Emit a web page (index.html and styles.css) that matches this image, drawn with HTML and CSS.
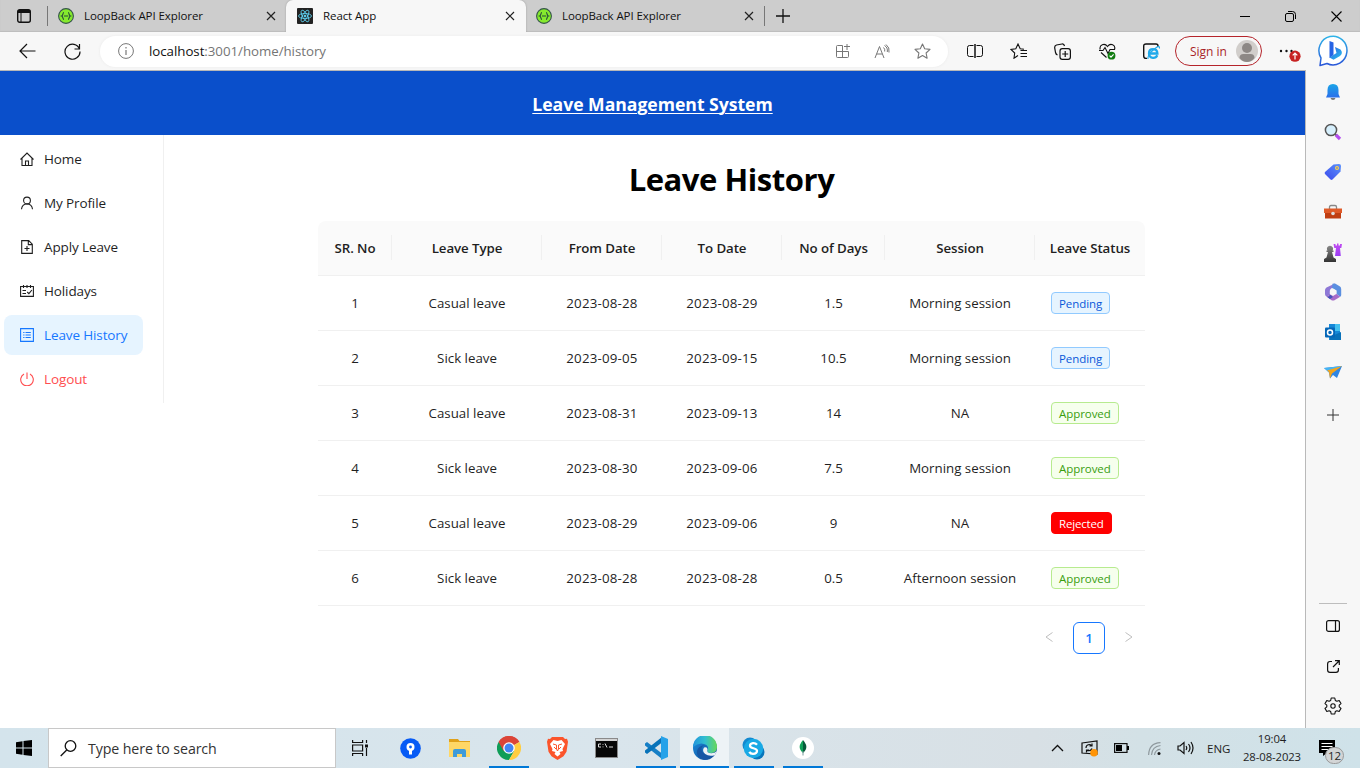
FILE: index.html
```html
<!DOCTYPE html>
<html lang="en">
<head>
<meta charset="utf-8">
<title>React App</title>
<link rel="stylesheet" href="styles.css">
</head>
<body>
<svg class="defs" width="0" height="0">
  <defs>
    <symbol id="loopback" viewBox="0 0 16 16"><circle cx="8" cy="8" r="7.400" fill="#85ea2d" stroke="#35544b" stroke-width="1.100"/><path d="M6 4.500C4.500 4.500 5.300 7.500 3.700 8c1.600.5.8 3.500 2.300 3.500M10 4.500c1.500 0 .7 3 2.300 3.500-1.600.5-.8 3.500-2.300 3.500M6 8h4.200" fill="none" stroke="#25473b" stroke-width="1.100"/></symbol>
    <symbol id="close" viewBox="0 0 10 10"><path d="M1 1l8 8M9 1l-8 8" stroke="#222" stroke-width="1.200"/></symbol>
    <linearGradient id="gBing" x1="0" y1="0" x2="1" y2="1"><stop offset="0" stop-color="#2a5fe0"/><stop offset="1" stop-color="#29c3ee"/></linearGradient>
    <linearGradient id="gBubble" x1="0" y1="0" x2="0" y2="1"><stop offset="0" stop-color="#2fb4e8"/><stop offset="1" stop-color="#2a56d8"/></linearGradient>
    <linearGradient id="gBell" x1="0" y1="0" x2="0" y2="1"><stop offset="0" stop-color="#1aa5e8"/><stop offset="1" stop-color="#2b6fea"/></linearGradient>
    <linearGradient id="gTag" x1="1" y1="0" x2="0" y2="1"><stop offset="0" stop-color="#5d93fb"/><stop offset="1" stop-color="#3a49ec"/></linearGradient>
    <linearGradient id="gRook" x1="0" y1="0" x2="0" y2="1"><stop offset="0" stop-color="#c24cf0"/><stop offset="1" stop-color="#9b3df5"/></linearGradient>
    <linearGradient id="gPawn" x1="0" y1="0" x2="0" y2="1"><stop offset="0" stop-color="#888"/><stop offset="1" stop-color="#333"/></linearGradient>
    <linearGradient id="gEdgeTop" x1="0" y1="0" x2="1" y2="0"><stop offset="0" stop-color="#2294dc"/><stop offset=".5" stop-color="#32bfd0"/><stop offset="1" stop-color="#67d858"/></linearGradient>
    <linearGradient id="gEdgeLow" x1="0" y1="0" x2="1" y2="1"><stop offset="0" stop-color="#1b8ee0"/><stop offset="1" stop-color="#114a92"/></linearGradient>
  </defs>
</svg>

<div class="screen">
  <div class="tabstrip">
    <div class="tab-actions"><svg width="14" height="14" viewBox="0 0 14 14" fill="none"><rect x=".7" y=".7" width="12.600" height="12.600" rx="2" stroke="#111" stroke-width="1.400"/><path d="M1 2.500h12" stroke="#111" stroke-width="3"/><path d="M4 3v10" stroke="#111"/></svg></div>
    <div class="tab tab-first"><svg width="16" height="16"><use href="#loopback"/></svg><span class="tab-title">LoopBack API Explorer</span><svg width="10" height="10"><use href="#close"/></svg></div>
    <div class="tab tab-active"><svg width="16" height="16" viewBox="0 0 16 16" fill="none" stroke="#61dafb" stroke-width=".8"><rect width="16" height="16" rx="1" fill="#222" stroke="none"/><ellipse cx="8" cy="8" rx="6.500" ry="2.500"/><ellipse cx="8" cy="8" rx="6.500" ry="2.500" transform="rotate(60 8 8)"/><ellipse cx="8" cy="8" rx="6.500" ry="2.500" transform="rotate(120 8 8)"/><circle cx="8" cy="8" r="1" fill="#61dafb"/></svg><span class="tab-title">React App</span><svg width="10" height="10"><use href="#close"/></svg></div>
    <div class="tab tab-last"><svg width="16" height="16"><use href="#loopback"/></svg><span class="tab-title">LoopBack API Explorer</span><svg width="10" height="10"><use href="#close"/></svg></div>
    <svg class="new-tab" width="14" height="14" viewBox="0 0 14 14"><path d="M7 0v14M0 7h14" stroke="#111" stroke-width="1.300"/></svg>
    <div class="window-buttons">
      <svg width="10" height="10"><path d="M0 5.500h10" stroke="#000"/></svg>
      <svg width="11" height="11" fill="none" stroke="#000"><rect x=".5" y="2.500" width="8" height="8" rx="1.500"/><path d="M3 .5h4.500q3 0 3 3V8"/></svg>
      <svg width="11" height="11"><path d="M.5.5l10 10m0-10l-10 10" stroke="#000" stroke-width="1.100"/></svg>
    </div>
  </div>

  <div class="toolbar">
    <svg class="nav-back" width="17" height="16" viewBox="0 0 17 16" fill="none" stroke="#111" stroke-width="1.200"><path d="M16.500 8H1M8 1L1 8l7 7"/></svg>
    <svg class="nav-reload" width="17" height="17" viewBox="0 0 17 17" fill="none" stroke="#111" stroke-width="1.200"><path d="M15.500 6A7.500 7.500 0 1 0 16 8.500M15.500 1v5h-5"/></svg>
    <div class="address">
      <svg width="16" height="16" viewBox="0 0 16 16" fill="none" stroke="#777"><circle cx="8" cy="8" r="7.400"/><path d="M8 7v5M8 4v1.500" stroke-width="1.200"/></svg>
      <span class="url"><b>localhost</b>:3001/home/history</span>
      <svg class="addr-icon" width="15" height="15" viewBox="0 0 15 15" fill="none" stroke="#777"><path d="M7.500 1.500h-5q-1 0-1 1v10q0 1 1 1h10q1 0 1-1v-5H1.500M7.500 1.500v12M12 0v6M9 2.500h6"/></svg>
      <svg class="addr-icon read-aloud" width="16" height="15" viewBox="0 0 16 15" fill="none" stroke="#777"><path d="M1 14L5.500 2.500 10 14M2.700 10h5.600M9.500 3.500q1.700 1.500 1.200 4M10.500 1.500q3.500 2 2.800 6.500M12 .5q4 3 3 8"/></svg>
      <svg class="addr-icon" width="17" height="16" viewBox="0 0 17 16" fill="none" stroke="#777" stroke-width="1.100"><path d="M8.500 1l2.200 4.700 5.300.7-3.900 3.600 1 5.200-4.600-2.600-4.600 2.600 1-5.200L1 6.400l5.300-.7z" stroke-linejoin="round"/></svg>
    </div>
    <svg class="tool" width="16" height="14" viewBox="0 0 16 14" fill="none" stroke="#111"><path d="M6.500 1.500H2.500q-2 0-2 2v7q0 2 2 2h4M9.500 1.500h4q2 0 2 2v7q0 2-2 2h-4"/><path d="M8 0v14" stroke-width="1.500"/></svg>
    <svg class="tool" width="17" height="16" viewBox="0 0 17 16" fill="none" stroke="#111" stroke-width="1.100"><path d="M8 12.500l-4 2.700.7-5.200L1 6.400l4.800-.7L8 1l2.200 4.700 3.800.5M10.500 7.500H17M10.500 10.500H17M10.500 13.500H17"/></svg>
    <svg class="tool" width="17" height="17" viewBox="0 0 17 17" fill="none" stroke="#111" stroke-width="1.200"><path d="M3.500 12Q2 11.500 1.500 9.500L.7 4.800Q.5 2.500 2.500 2L8 1q2-.3 2.500 2M11.200 8v6M8.200 11h6"/><rect x="6" y="5.700" width="10.400" height="10.600" rx="2.300"/></svg>
    <svg class="tool" width="17" height="17" viewBox="0 0 17 17" fill="none" stroke="#111" stroke-width="1.100"><path d="M1.200 6.500C0 2 5.500-.5 8.500 3.500 11.500-.5 17 2 15.500 6.500M0 7.500h4l2-3 3 6 2-4h5M2 9.500l5.500 5"/><circle cx="12.500" cy="12.700" r="3.900" fill="#107c10" stroke="none"/><path d="M10.600 12.700l1.400 1.400 2.600-2.700" stroke="#fff"/></svg>
    <svg class="tool" width="17" height="17" viewBox="0 0 17 17" fill="none"><path d="M4 15.400H3Q.7 15.400.7 13V3Q.7 1 3 1h10q2 0 2 2v1" stroke="#111" stroke-width="1.400"/><path d="M14.300 12.200q-1.300 2.800-4.300 2.600-4-.5-4-4.400 0-4.200 4-4.200 4.200 0 4.400 4.300H7" stroke="#20a9ea" stroke-width="2.300"/><path d="M5 16Q4 11 14 4q3-1.200 2.400 1.500" stroke="#20a9ea" stroke-width="1.200"/></svg>
    <div class="signin"><span>Sign in</span><svg width="22" height="22" viewBox="0 0 22 22"><circle cx="11" cy="11" r="11" fill="#d1cecb"/><circle cx="11" cy="8" r="5" fill="#8d8885"/><path d="M3.500 18q0-4 4-4h7q4 0 4 4-3 4-7.500 4t-7.500-4" fill="#8d8885"/></svg></div>
    <svg class="more" width="22" height="22" viewBox="0 0 22 22"><g fill="#111"><circle cx="2" cy="11" r="1.200"/><circle cx="7.500" cy="11" r="1.200"/><circle cx="12.500" cy="11" r="1.200"/></g><circle cx="16" cy="16.200" r="5.600" fill="#c72222"/><path d="M16 19.500V13.300M13.700 15.300l2.300-2.300 2.300 2.300" fill="none" stroke="#fff" stroke-width="1.200"/></svg>
    <svg class="bing" width="32" height="32" viewBox="0 0 32 32"><path d="M2 30.500L3 23A14 14.300 0 1 1 9 28.500z" fill="#fff" stroke="url(#gBubble)" stroke-width="1.500" stroke-linejoin="round"/><path d="M11.500 6l4 1.500V20l-4 3z" fill="#2563e5"/><path d="M17 12l5.500 2.500q3 3.500-.5 6.500l-6.500 3.800-4-2.300 7-4.500z" fill="url(#gBing)"/></svg>
  </div>

  <div class="browser-body">
    <div class="page">
      <header class="app-header"><a>Leave Management System</a></header>
      <div class="app-body">
        <nav class="menu">
          <div class="menu-item"><svg viewBox="0 0 14 14"><path d="M.5 7.500L7 1l6.500 6.500M2 6.500v7h10v-7M5.500 13.500V9h3v4.500"/></svg><span>Home</span></div>
          <div class="menu-item"><svg viewBox="0 0 14 14"><circle cx="7" cy="4.500" r="3.400"/><path d="M1.500 13.300Q2 8 7 8t5.500 5.300"/></svg><span>My Profile</span></div>
          <div class="menu-item"><svg viewBox="0 0 14 14"><path d="M1.700.6h7l3.600 3.600v9.200H1.700zM8.300.6v4h4M4.500 8.500h5M7 6v5"/></svg><span>Apply Leave</span></div>
          <div class="menu-item"><svg viewBox="0 0 14 14"><path d="M.6 2.500h12.800v9.900H.6zM3.500 1v3M7 1v3M10.500 1v3M2.500 6.500H6M2.500 9.500H6M7.200 8l1.700 1.700 3-3.700"/></svg><span>Holidays</span></div>
          <div class="menu-item selected"><svg viewBox="0 0 14 14"><path d="M.6.600h12.800v12.800H.6zM3.200 4.500h1.300M5.500 4.500h5.300M3.200 7h1.300M5.500 7h5.300M3.200 9.500h1.300M5.500 9.500h5.300"/></svg><span>Leave History</span></div>
          <div class="menu-item danger"><svg viewBox="0 0 14 14"><path d="M4 2A6.300 6.300 0 1 0 10 2M7 .5V7"/></svg><span>Logout</span></div>
        </nav>
        <main class="content">
          <h1>Leave History</h1>
          <table class="history">
            <colgroup><col class="c-sr"><col class="c-wide"><col class="c-date"><col class="c-date"><col class="c-days"><col class="c-wide"><col class="c-status"></colgroup>
            <thead><tr><th>SR. No</th><th>Leave Type</th><th>From Date</th><th>To Date</th><th>No of Days</th><th>Session</th><th>Leave Status</th></tr></thead>
            <tbody>
              <tr><td>1</td><td>Casual leave</td><td class="date-cell">2023-08-28</td><td class="date-cell">2023-08-29</td><td>1.5</td><td>Morning session</td><td><span class="tag pending">Pending</span></td></tr>
              <tr><td>2</td><td>Sick leave</td><td class="date-cell">2023-09-05</td><td class="date-cell">2023-09-15</td><td>10.5</td><td>Morning session</td><td><span class="tag pending">Pending</span></td></tr>
              <tr><td>3</td><td>Casual leave</td><td class="date-cell">2023-08-31</td><td class="date-cell">2023-09-13</td><td>14</td><td>NA</td><td><span class="tag approved">Approved</span></td></tr>
              <tr><td>4</td><td>Sick leave</td><td class="date-cell">2023-08-30</td><td class="date-cell">2023-09-06</td><td>7.5</td><td>Morning session</td><td><span class="tag approved">Approved</span></td></tr>
              <tr><td>5</td><td>Casual leave</td><td class="date-cell">2023-08-29</td><td class="date-cell">2023-09-06</td><td>9</td><td>NA</td><td><span class="tag rejected">Rejected</span></td></tr>
              <tr><td>6</td><td>Sick leave</td><td class="date-cell">2023-08-28</td><td class="date-cell">2023-08-28</td><td>0.5</td><td>Afternoon session</td><td><span class="tag approved">Approved</span></td></tr>
            </tbody>
          </table>
          <div class="pagination">
            <svg width="8" height="10" viewBox="0 0 8 10"><path d="M7.500.5L1 5l6.500 4.500"/></svg>
            <span class="page-number">1</span>
            <svg width="8" height="10" viewBox="0 0 8 10"><path d="M.5.5L7 5 .5 9.500"/></svg>
          </div>
        </main>
      </div>
    </div>

    <aside class="edge-bar">
      <div class="slot"><svg width="16" height="18" viewBox="0 0 16 18"><path d="M5.500 15h5q-.5 2-2.500 2t-2.500-2" fill="#777"/><path d="M8 1q5.500 0 5.500 6v4l1.500 3.500H1L2.500 11V7Q2.500 1 8 1" fill="url(#gBell)"/></svg></div>
      <div class="slot"><svg width="18" height="18" viewBox="0 0 18 18"><path d="M11 11l2 2" stroke="#666" stroke-width="2"/><path d="M12 12l4 4" stroke="#b44cf0" stroke-width="3.200"/><circle cx="7" cy="7" r="5.600" fill="#d6effc" stroke="#555" stroke-width="1.500"/></svg></div>
      <div class="slot"><svg width="18" height="18" viewBox="0 0 18 18"><path d="M9.500 1.500L15 1q2 0 2 2l-.5 5.500-8 8q-1 .8-2 0L1 11q-.8-1 0-2z" fill="url(#gTag)"/><circle cx="13" cy="5" r="2" fill="#ffd24d"/><circle cx="13" cy="5" r=".8" fill="#3566d8"/></svg></div>
      <div class="slot"><svg width="18" height="16" viewBox="0 0 18 16"><path d="M5.500 5V3q0-1.500 1.500-1.500h4q1.500 0 1.500 1.500v2" fill="none" stroke="#888" stroke-width="1.300"/><path d="M0 4.500h18v4.500H0z" fill="#df5a28"/><path d="M1 9h16v5.500H1z" fill="#bf3e12"/><circle cx="9" cy="9.500" r="1.800" fill="#ddd"/></svg></div>
      <div class="slot"><svg width="18" height="19" viewBox="0 0 18 19"><path d="M9.500 1h2v1.500H13V.500h1.500v2H16V1h2l-.7 4H16l.8 8H11l1-8h-1.700z" fill="url(#gRook)"/><path d="M0 19v-3l2.500-1.500L4 9H2.500V7.500H3.500a3 3 0 1 1 5 0h1V9H8l1.500 5.500L12 16v3z" fill="url(#gPawn)"/></svg></div>
      <div class="slot"><svg width="18" height="18" viewBox="0 0 18 18"><path d="M11 .5L2.500 4.500Q1 5.500 1 7v4q0 1.700 1.500 2.500L6 12V7.500q0-1.500 1.500-2.200L12 3z" fill="#8e78d6"/><path d="M8.500.8Q10 0 11.500.8L16 3.500q1.200.8 1.200 2.500v6q0 1-1 1.700L12.500 11V7.500L8 5z" fill="#5b8fe0"/><path d="M2.500 13.500L9 10l3.500 1 3.700 2.700-5.700 3.500q-1.500.8-3 0z" fill="#a76cc9"/><path d="M2.500 13.500q3 1 3.500-2l3 2.500-3 2z" fill="#4354bb"/><path d="M9 5.500l3.300 2v3.600L9 13l-3.200-1.900V7.500z" fill="#f7f7f7"/></svg></div>
      <div class="slot"><svg width="16" height="16" viewBox="0 0 16 16"><path d="M4 0h11v16H4z" fill="#1688d8"/><path d="M10 0h5v7h-5z" fill="#45c1ef"/><path d="M16 8v8H5v-3z" fill="#0871ba"/><rect y="3.500" width="10" height="10" rx="1" fill="#0567b8"/><circle cx="5" cy="8.500" r="2.500" fill="none" stroke="#fff" stroke-width="1.500"/></svg></div>
      <div class="slot"><svg width="18" height="14" viewBox="0 0 18 14"><path d="M0 3l18-2-5 12-4-3-3 3.500-1-6z" fill="#2f86e4"/><path d="M0 3l18-2L5 7.500z" fill="#45b4f3"/><path d="M3 5.500L18 1 8 8.500 6 13.500 5 7z" fill="#f5a51b"/></svg></div>
      <div class="slot slot-add"><svg width="12" height="12"><path d="M6 0v12M0 6h12" stroke="#333"/></svg></div>
      <div class="edge-bottom">
        <div class="slot"><svg width="14" height="12" viewBox="0 0 14 12" fill="none" stroke="#111" stroke-width="1.200"><rect x=".6" y=".6" width="12.800" height="10.800" rx="2"/><path d="M9.500 1v10"/></svg></div>
        <div class="slot"><svg width="13" height="13" viewBox="0 0 13 13" fill="none" stroke="#111" stroke-width="1.200"><path d="M5 1.500H3q-2.400 0-2.400 2.400V10q0 2.400 2.400 2.400h6q2.400 0 2.400-2.400V8M6 7l6-6M8 .7h4.300V5"/></svg></div>
        <div class="slot"><svg width="18" height="18" viewBox="0 0 18 18" fill="none" stroke="#111" stroke-width="1.100"><path d="M7.200 1h3.600l.5 2.400 1.600.9 2.300-.8L17 6.600l-1.800 1.600v1.600l1.800 1.600-1.800 3.100-2.300-.8-1.600.9-.5 2.400H7.200l-.5-2.400-1.600-.9-2.300.8L1 11.400l1.800-1.600V8.200L1 6.600l1.800-3.100 2.300.8 1.600-.9z" stroke-linejoin="round"/><circle cx="9" cy="9" r="2.200"/></svg></div>
      </div>
    </aside>
  </div>

  <div class="taskbar">
    <div class="start"><svg width="16" height="16" viewBox="0 0 16 16"><path d="M0 2.200L6.500 1.300v6.200H0zM7.500 1.100L16 0v7.500H7.500zM0 8.500h6.500v6.200L0 13.800zM7.500 8.500H16V16l-8.500-1.100z"/></svg></div>
    <div class="search"><svg width="17" height="17" viewBox="0 0 17 17" fill="none" stroke="#111" stroke-width="1.300"><circle cx="10.500" cy="6" r="5.300"/><path d="M6.700 10L.7 16"/></svg><span>Type here to search</span></div>
    <div class="task task-view"><svg width="17" height="16" viewBox="0 0 17 16" fill="none" stroke="#111" stroke-width="1.200"><path d="M.6 0v2.500h10V0M.6 16v-2.500h10V16M.6 5h10v6H.6zM14.500 0v3M14.500 8v8"/><path d="M13 4.500h3v3h-3z" fill="#111" stroke="none"/></svg></div>
    <div class="task"><svg width="21" height="21" viewBox="0 0 21 21"><circle cx="10.500" cy="10.500" r="10.300" fill="#075bf5"/><circle cx="10.500" cy="9" r="4" fill="#fff"/><path d="M9 11h3v5.500H9z" fill="#fff"/><circle cx="10.500" cy="9" r="1.400" fill="#075bf5"/></svg></div>
    <div class="task"><svg width="21" height="18" viewBox="0 0 21 18"><path d="M0 0h9l1.500 2H21v3H0z" fill="#e0a11a"/><path d="M0 3h21v15H0z" fill="#ffd766"/><path d="M4 18v-6q0-2 2-2h9q2 0 2 2v6h-4v-3H8v3z" fill="#3f9bd9"/></svg></div>
    <div class="task open"><svg width="24" height="24" viewBox="0 0 24 24"><path d="M12 12L1.600 6A12 12 0 0 1 22.400 6z" fill="#db4437"/><path d="M12 12L1.600 6A12 12 0 0 0 12 24l5.200-9z" fill="#0f9d58"/><path d="M12 12l10.400-6A12 12 0 0 1 12 24l5.200-9z" fill="#ffcd40"/><path d="M12 6h10.400A12 12 0 0 0 1.600 6l5 9z" fill="#db4437"/><circle cx="12" cy="12" r="5.800" fill="#fff"/><circle cx="12" cy="12" r="4.500" fill="#4285f4"/></svg></div>
    <div class="task"><svg width="21" height="24" viewBox="0 0 21 24"><path d="M5 1h11l2 2 2-.2 1 3-1.500 10-3 4.500-6 3.700-6-3.700-3-4.500L0 5.800l1-3 2 .2z" fill="#fb542b"/><path d="M10.500 5l4-1 3.500 4-2.500 5 .5 2-3.500 1 1 2-3 2.500-3-2.500 1-2-3.500-1 .5-2L3 8l3.500-4z" fill="#fff"/><path d="M6 8l3.500 1v4l1 2 1-2V9L15 8M7 11l2 2M14 11l-2 2" fill="none" stroke="#fb542b"/></svg></div>
    <div class="task"><svg width="23" height="20" viewBox="0 0 23 20"><rect x=".5" y=".5" width="22" height="19" fill="#080808" stroke="#8a8a8a"/><path d="M1 1h21v2H1z" fill="#d3d3d3"/><path d="M6 6H3.500v3H6M8 6v.8M8 8.500v.8M10 5.500l2 4M14 9h4" fill="none" stroke="#ddd"/></svg></div>
    <div class="task open"><svg width="24" height="24" viewBox="0 0 24 24"><path d="M1 7.500l2-1.500 15 11.500V23L1 9.500z" fill="#167fc6"/><path d="M1 16.500l2 1.500L18 6.500V1L1 14.500z" fill="#0873b9"/><path d="M17 0l7 3v18l-7 3z" fill="#26a2e9"/></svg></div>
    <div class="task open current"><svg width="24" height="24" viewBox="0 0 24 24"><circle cx="12" cy="12" r="12" fill="url(#gEdgeLow)"/><path d="M0 11A12 12 0 0 1 24 11q0 5.500-5.500 6-5 0-4-3 1.500-2.500-1-5Q7 5 0 11" fill="url(#gEdgeTop)"/><path d="M8.500 12q-1 8 12.500 7-4 5-10 4.800Q3 22 4 15q1-5 8-6-3 1-3.500 3" fill="#1657a5"/><path d="M14.500 13.500q-1.500 3.700 4 3.700 3.300-.2 5.200-2-.7 2.300-2 4-6 1.500-9.500-1.200-3.500-3-1.200-6.500 3.500-1 3.500 2" fill="#edf3f6"/></svg></div>
    <div class="task open"><svg width="23" height="23" viewBox="0 0 23 23"><circle cx="8" cy="8" r="7.500" fill="#1389cf"/><circle cx="15" cy="15" r="7.500" fill="#0875bb"/><circle cx="11.500" cy="11.500" r="9.700" fill="#18a9e5"/><path d="M15 7.800Q13.500 6 11 6.200 8 6.500 8 8.800c0 3.200 7 1.700 7 5 0 2.500-2.500 3-4 3q-2.500 0-3.700-2" fill="none" stroke="#fff" stroke-width="2.300"/></svg></div>
    <div class="task open"><svg width="22" height="22" viewBox="0 0 22 22"><circle cx="11" cy="11" r="11" fill="#fff"/><path d="M11 3q-4.500 5-3 9 1 2.500 3 4z" fill="#10a35a"/><path d="M11 3q4.500 5 3 9-1 2.500-3 4z" fill="#075b3b"/><path d="M11 14v4.500" stroke="#799"/></svg></div>
    <div class="tray">
      <svg class="tr-chevron" width="13" height="8" viewBox="0 0 13 8" fill="none" stroke="#111" stroke-width="1.300"><path d="M1 7l5.500-5.500L12 7"/></svg>
      <svg class="tr-sync" width="18" height="17" viewBox="0 0 18 17" fill="none" stroke="#111" stroke-width="1.200"><path d="M1 3l15-2v13L1 13z"/><path d="M5 8q0-3.500 4-3.500l2 1.500M11 3.500V6H8.500M11 8.500q-1 3-5 2M5.500 12.500V10H8"/><circle cx="13" cy="12.800" r="3.800" fill="#ff9406" stroke="none"/></svg>
      <svg class="tr-battery" width="15" height="10" viewBox="0 0 15 10"><rect x=".6" y=".6" width="12.400" height="8.800" fill="none" stroke="#111" stroke-width="1.200"/><path d="M2 2h6v6H2zM13 3h2v4h-2z"/></svg>
      <svg class="tr-wifi" width="13" height="13" viewBox="0 0 13 13" fill="none" stroke="#8f999e" stroke-width="1.200"><path d="M.6 13Q1 1 12.500.6M3.500 13Q4 4.500 12.500 3.500M6.500 13q.5-5 6-6"/><circle cx="11" cy="11.500" r="1.500" fill="#111" stroke="none"/></svg>
      <svg class="tr-volume" width="17" height="14" viewBox="0 0 17 14" fill="none" stroke="#111" stroke-width="1.200"><path d="M1 5h2l4-3.500v11L3 9H1zM9 5q1.500 2 0 4M11.500 3q3 4 0 8M14 1q4 6 0 12"/></svg>
      <span class="lang">ENG</span>
      <div class="clock"><span>19:04</span><span>28-08-2023</span></div>
      <div class="notifications"><svg width="17" height="16" viewBox="0 0 17 16"><path d="M0 0h16v13H8l-4 3v-3H0z"/><path d="M2.500 3.500h11M2.500 6.500h11M2.500 9.500h7" stroke="#fff" stroke-width="1.100"/></svg><span class="badge">12</span></div>
    </div>
  </div>
</div>
</body>
</html>
```
FILE: styles.css
```css
* { box-sizing: border-box; }
body { margin: 0; font-family: "Open Sans", "Noto Sans", sans-serif; color: #1f1f1f; }
svg { display: block; flex: none; }
.defs { position: absolute; }
.screen { width: 1360px; height: 768px; display: flex; flex-direction: column; overflow: hidden; background: #fff; }

/* Browser tabs */
.tabstrip { height: 32px; flex: none; display: flex; align-items: center; background: #cdcdcd; box-shadow: inset 0 -1px 1px #bdbdbd; }
.tab-actions { width: 48px; height: 20px; padding: 3px 0 0 17px; border-right: 1px solid #777; }
.tab { height: 32px; display: flex; align-items: center; color: #111; font-size: 11.500px; }
.tab-first { width: 238px; padding: 0 10px; }
.tab-active { width: 240px; padding: 0 11px; background: #f7f7f7; border-radius: 7px 7px 0 0; box-shadow: 0 0 2px #999; clip-path: inset(0 -3px 0 -3px); }
.tab-last { width: 239px; height: 20px; padding: 0 10px; border-right: 1px solid #777; }
.tab-title { flex: 1; margin: -2px 0 0 10px; letter-spacing: -.09px; white-space: nowrap; }
.new-tab { margin-left: 11px; }
.window-buttons { margin-left: auto; padding-right: 18px; display: flex; gap: 35px; align-items: center; }

/* Navigation toolbar */
.toolbar { height: 38px; flex: none; display: flex; align-items: center; background: #f7f7f7; }
.nav-back { margin-left: 19px; }
.nav-reload { margin-left: 28px; }
.address { width: 848px; height: 31px; margin: 0 19px; padding: 0 17px 0 18px; border-radius: 16px; background: #fff; box-shadow: 0 0 3px #eaeaea; display: flex; align-items: center; }
.url { margin: -1px auto 0 15px; color: #757575; font-size: 13.300px; letter-spacing: -.04px; white-space: nowrap; }
.url b { color: #111; font-weight: 400; }
.addr-icon { margin-left: 24px; }
.tool { margin-right: 27.200px; }
.signin { width: 87px; height: 30px; margin-left: -12px; padding: 0 3px 0 14px; border: 1.500px solid #b5242b; border-radius: 15px; display: flex; align-items: center; justify-content: space-between; color: #a91f27; font-size: 12px; white-space: nowrap; }
.more { margin-left: 17px; }
.bing { margin-left: 17px; }

/* Web page */
.browser-body { height: 658px; display: flex; }
.page { width: 1305px; border-top: 1px solid #b8b8b8; background: #fff; }
.app-header { height: 64px; padding-top: 1px; display: flex; align-items: center; justify-content: center; background: #0a4fcb; color: #fff; font-size: 17.600px; font-weight: 700; letter-spacing: -.02px; }
.app-header a { text-decoration: underline; text-decoration-thickness: 1px; text-underline-offset: 2px; }
.app-body { display: flex; align-items: flex-start; }
.menu { width: 164px; height: 268px; padding: 4px 20px 0 4px; border-right: 1px solid #f0f0f0; display: flex; flex-direction: column; gap: 4px; }
.menu-item { height: 40px; padding-left: 16px; border-radius: 8px; display: flex; align-items: center; gap: 10px; font-size: 13.500px; letter-spacing: -.12px; white-space: nowrap; }
.menu-item svg { width: 14px; height: 14px; fill: none; stroke: currentColor; stroke-width: 1.100; }
.selected { background: #e6f4ff; color: #1677ff; }
.danger { color: #ff4d4f; }
.content { width: 827px; margin-left: 154px; }
h1 { height: 86px; margin: 0; padding-top: 22px; text-align: center; color: #000; font-size: 31px; line-height: 44px; font-weight: 700; letter-spacing: -.45px; }
.history { width: 827px; table-layout: fixed; border-collapse: separate; border-spacing: 0; }
.c-sr { width: 74px; }
.c-wide { width: 150px; }
.c-date { width: 120px; }
.c-days { width: 103px; }
.c-status { width: 110px; }
.history th, .history td { height: 55px; padding: 0; border-bottom: 1px solid #f0f0f0; text-align: center; vertical-align: middle; font-size: 13.300px; white-space: nowrap; }
.history th { background: linear-gradient(#f0f0f0, #f0f0f0) right 14px / 1px 25px no-repeat #fafafa; font-weight: 600; letter-spacing: -.08px; }
.history th:first-child { border-top-left-radius: 8px; }
.history th:last-child { border-top-right-radius: 8px; background: #fafafa; }
.history td:last-child { padding-left: 16px; text-align: left; }
.history .date-cell { letter-spacing: .2px; }
.tag { height: 22px; padding: 0 7px; border: 1px solid; border-radius: 4px; display: inline-block; vertical-align: middle; font-size: 11.500px; line-height: 21px; letter-spacing: -.06px; }
.pending { color: #0958d9; background: #e6f4ff; border-color: #91caff; }
.approved { color: #389e0d; background: #f6ffed; border-color: #b7eb8f; }
.rejected { color: #fff; background: #f00; border-color: #f00; letter-spacing: -.16px; }
.pagination { margin-top: 16px; padding-right: 12px; display: flex; justify-content: flex-end; align-items: center; gap: 20px; }
.pagination svg { fill: none; stroke: #bfbfbf; margin-bottom: 2px; }
.page-number { width: 32px; height: 32px; border: 1px solid #1677ff; border-radius: 6px; color: #1677ff; text-align: center; line-height: 30px; font-size: 13.300px; font-weight: 600; }

/* Browser sidebar */
.edge-bar { width: 55px; border-left: 1px solid #b9b9b9; background: #f7f7f7; display: flex; flex-direction: column; padding-top: 2px; }
.slot { height: 40px; flex: none; display: flex; align-items: center; justify-content: center; }
.slot-add { margin-top: 3px; }
.edge-bottom { width: 28px; margin: auto auto 2px; border-top: 1px solid #bdbdbd; padding-top: 2px; }

/* Desktop taskbar */
.taskbar { height: 40px; flex: none; display: flex; background: linear-gradient(90deg, #d4e4ec, #d9e5ec 45%, #d8e0e5 76%, #d3e1e6 84%, #cfe2e9); }
.start { width: 48px; display: flex; align-items: center; justify-content: center; }
.search { width: 288px; border: 1px solid #c8c8c8; background: #fff; padding-left: 11px; display: flex; align-items: center; gap: 11px; color: #333; font-size: 14.200px; letter-spacing: -.1px; white-space: nowrap; }
.task { width: 49px; display: flex; align-items: center; justify-content: center; background: linear-gradient(#0078d7, #0078d7) center bottom / 0 2px no-repeat; }
.task-view { width: 50.400px; padding-right: 2px; }
.open { background-size: 40px 2px; }
.current { background-color: #edf3f6; background-size: 49px 2px; }
.tray { margin-left: auto; display: flex; align-items: center; }
.tr-chevron { margin-right: 17px; }
.tr-sync { margin-right: 15px; }
.tr-battery { margin-right: 19px; }
.tr-wifi { margin-right: 16px; }
.tr-volume { margin-right: 13px; }
.lang { width: 36px; font-size: 11.500px; }
.clock { width: 58px; display: flex; flex-direction: column; align-items: center; font-size: 11.300px; line-height: 18px; letter-spacing: -.1px; white-space: nowrap; }
.clock span:first-child { margin-top: -1px; }
.notifications { width: 59px; height: 16px; padding-left: 18px; position: relative; }
.badge { position: absolute; left: 24px; top: 7px; width: 19px; height: 17px; border: 1px solid #999; border-radius: 9px; background: #d3d5d6; text-align: center; font-size: 11.500px; line-height: 15px; }
```
